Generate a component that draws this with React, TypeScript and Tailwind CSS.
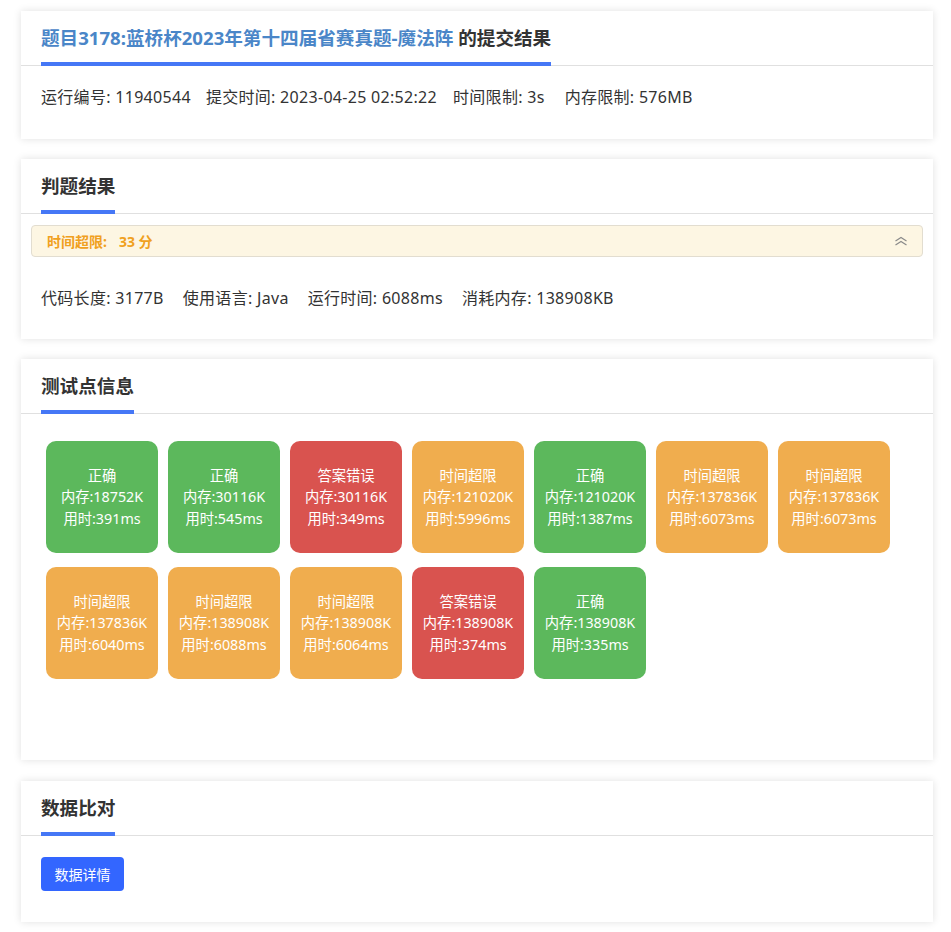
import React from "react";

type Pt = { s: string; m: string; t: string; c: "ok" | "wa" | "tle" };

const pts: Pt[] = [
  { s: "正确", m: "18752K", t: "391ms", c: "ok" },
  { s: "正确", m: "30116K", t: "545ms", c: "ok" },
  { s: "答案错误", m: "30116K", t: "349ms", c: "wa" },
  { s: "时间超限", m: "121020K", t: "5996ms", c: "tle" },
  { s: "正确", m: "121020K", t: "1387ms", c: "ok" },
  { s: "时间超限", m: "137836K", t: "6073ms", c: "tle" },
  { s: "时间超限", m: "137836K", t: "6073ms", c: "tle" },
  { s: "时间超限", m: "137836K", t: "6040ms", c: "tle" },
  { s: "时间超限", m: "138908K", t: "6088ms", c: "tle" },
  { s: "时间超限", m: "138908K", t: "6064ms", c: "tle" },
  { s: "答案错误", m: "138908K", t: "374ms", c: "wa" },
  { s: "正确", m: "138908K", t: "335ms", c: "ok" },
];

const bg: Record<Pt["c"], string> = {
  ok: "bg-[#5cb85c]",
  wa: "bg-[#d9534f]",
  tle: "bg-[#f0ad4e]",
};

function Header({ children }: { children: React.ReactNode }) {
  return (
    <div className="px-5 border-b border-[#e0e0e0]">
      <div className="inline-block pt-[14px] pb-[11px] border-b-4 border-[#4577f6] -mb-px text-[18.6px] leading-[26px] font-bold text-[#333]">
        {children}
      </div>
    </div>
  );
}

function Card({ children, className = "" }: { children: React.ReactNode; className?: string }) {
  return (
    <div className={"bg-white shadow-[0_0_8px_rgba(0,0,0,0.12)] " + className}>{children}</div>
  );
}

export default function App() {
  return (
    <div
      className="min-h-[932px] bg-white pt-[11px] pb-[10px] pl-[21px] pr-[18px] text-[#333]"
      style={{ fontFamily: '"Noto Sans", "Noto Sans CJK SC", sans-serif' }}
    >
      <div className="flex flex-col gap-5">
        <Card>
          <Header>
            <span className="text-[#4a86c8]">题目3178:蓝桥杯2023年第十四届省赛真题-魔法阵</span> 的提交结果
          </Header>
          <div className="px-5 pt-5 pb-[31px] text-[16px] leading-[22px] tracking-[0.3px] flex gap-[15px]">
            <span>运行编号: 11940544</span>
            <span>提交时间: 2023-04-25 02:52:22</span>
            <span className="ml-px">时间限制: 3s</span>
            <span className="ml-[5px]">内存限制: 576MB</span>
          </div>
        </Card>

        <Card>
          <Header>判题结果</Header>
          <div className="px-[10px] pt-[11px]">
            <div className="h-[32px] rounded-[4px] border border-[#e2ddd0] bg-[#fdf6e3] flex items-center justify-between pl-[15px] pr-[14px]">
              <span className="text-[14px] font-bold text-[#f0a020]">
                时间超限:<span className="ml-[12px]">33 分</span>
              </span>
              <svg width="14" height="10" viewBox="0 0 14 10" fill="none" stroke="#8a8a8a" strokeWidth="1.2">
                <path d="M1.5 5 L7 1.5 L12.5 5" />
                <path d="M1.5 9 L7 5.5 L12.5 9" />
              </svg>
            </div>
          </div>
          <div className="px-5 pt-[30px] pb-[30px] text-[16px] leading-[22px] tracking-[0.3px] flex gap-[19px]">
            <span>代码长度: 3177B</span>
            <span>使用语言: Java</span>
            <span>运行时间: 6088ms</span>
            <span>消耗内存: 138908KB</span>
          </div>
        </Card>

        <Card>
          <Header>测试点信息</Header>
          <div className="pl-[25px] pr-5 pt-[27px] pb-[81px] flex flex-wrap gap-x-[10px] gap-y-[14px]">
            {pts.map((p, i) => (
              <div
                key={i}
                className={
                  "w-[112px] h-[112px] rounded-[10px] flex flex-col items-center justify-center text-white text-[14.3px] leading-[21.5px] " +
                  bg[p.c]
                }
              >
                <span>{p.s}</span>
                <span>内存:{p.m}</span>
                <span>用时:{p.t}</span>
              </div>
            ))}
          </div>
        </Card>

        <Card className="mt-px">
          <Header>数据比对</Header>
          <div className="px-5 pt-[21px] pb-[31px]">
            <button className="h-[34px] w-[83px] rounded-[4px] bg-[#3366ff] text-white text-[14px]">
              数据详情
            </button>
          </div>
        </Card>
      </div>
    </div>
  );
}
